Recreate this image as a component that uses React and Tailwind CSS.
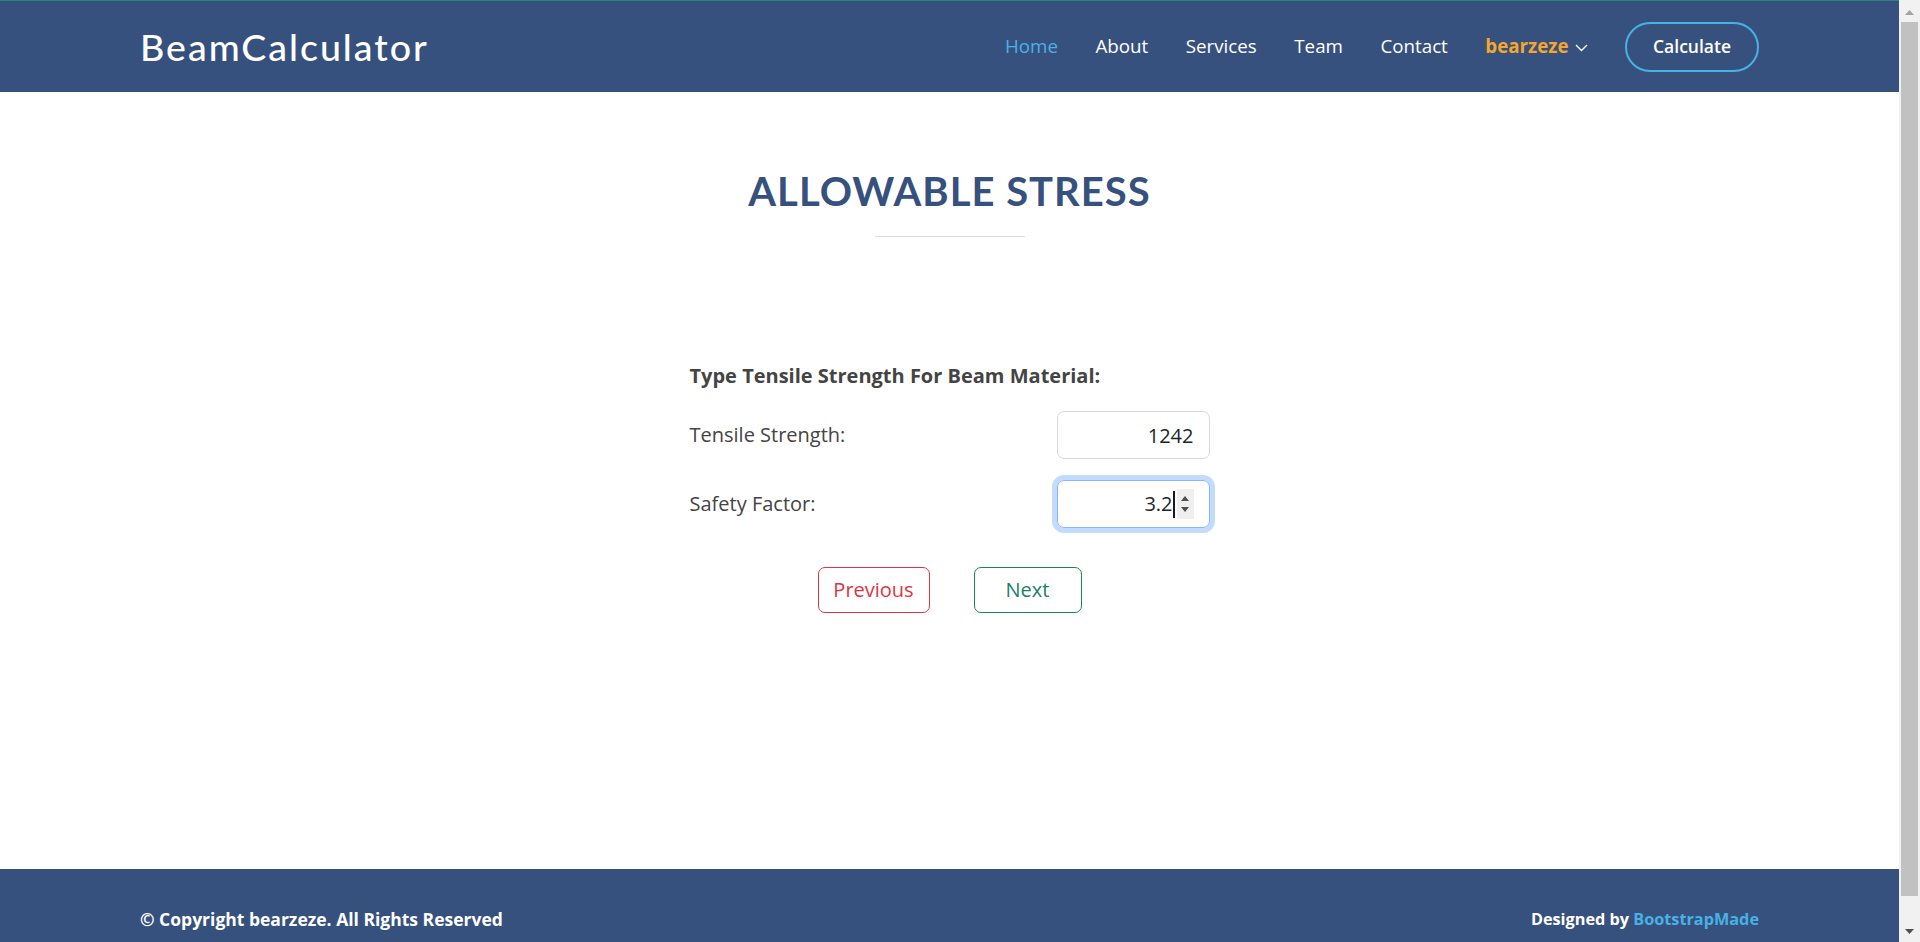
import React from "react";

const jost = { fontFamily: "Lato, 'Noto Sans', sans-serif" };

function Chevron() {
  return (
    <svg width="13" height="8" viewBox="0 0 13 8" className="ml-[6px] mt-[2px]">
      <polyline points="1,1 6.5,6.5 12,1" fill="none" stroke="#ffffff" strokeWidth="1.4" />
    </svg>
  );
}

function Header() {
  return (
    <header className="h-[92px] shrink-0 bg-[#37517e] border-t border-[#2f8080]">
      <div className="w-[1619px] mx-auto h-full flex items-center justify-between">
        <div className="text-[37.5px] font-medium tracking-[2px] text-white leading-none" style={jost}>
          BeamCalculator
        </div>
        <nav className="flex items-center font-['Open_Sans',sans-serif] text-[18.75px] font-medium">
          <a className="pl-[37.5px] text-[#47b2e4]">Home</a>
          <a className="pl-[37.5px] text-white">About</a>
          <a className="pl-[37.5px] text-white">Services</a>
          <a className="pl-[37.5px] text-white">Team</a>
          <a className="pl-[37.5px] text-white">Contact</a>
          <a className="pl-[37.5px] text-[#f5a62c] font-bold flex items-center">
            bearzeze
            <Chevron />
          </a>
          <a className="ml-[37.5px] px-[26px] h-[50px] flex items-center rounded-full border-[2.5px] border-[#47b2e4] text-white text-[17.5px] font-semibold">
            Calculate
          </a>
        </nav>
      </div>
    </header>
  );
}

function Field({ label, children }) {
  return (
    <div className="flex items-center justify-between h-[48px]">
      <span className="text-[20px] text-[#444444]">{label}</span>
      {children}
    </div>
  );
}

function Tri({ up, color, w = 9, h = 5 }) {
  return (
    <svg width={w} height={h} viewBox={`0 0 ${w} ${h}`}>
      {up ? (
        <polygon points={`0,${h} ${w / 2},0 ${w},${h}`} fill={color} />
      ) : (
        <polygon points={`0,0 ${w / 2},${h} ${w},0`} fill={color} />
      )}
    </svg>
  );
}

function Main() {
  return (
    <section className="h-[777px] shrink-0 pt-[75px] bg-white">
      <h2
        className="text-center text-[40px] leading-[48px] font-bold uppercase tracking-[1px] text-[#37517e]"
        style={jost}
      >
        Allowable Stress
      </h2>
      <div className="mt-[21px] mx-auto w-[150px] h-px bg-[#dddddd]" />

      <div className="w-[520px] mx-auto mt-[124px] font-['Open_Sans',sans-serif]">
        <div className="text-[20px] leading-[30px] font-bold text-[#444444]">
          Type Tensile Strength For Beam Material:
        </div>
        <div className="mt-[20px] flex flex-col gap-[21px]">
          <Field label="Tensile Strength:">
            <input
              readOnly
              value="1242"
              className="w-[153px] h-[48px] rounded-[7px] border border-[#d6d9dc] text-right pr-[15px] text-[20px] text-[#212529] outline-none font-['Open_Sans',sans-serif]"
            />
          </Field>
          <Field label="Safety Factor:">
            <div className="w-[153px] h-[48px] rounded-[7px] border border-[#86b7fe] shadow-[0_0_0_5px_#c2dbfe] flex items-center justify-end pr-[15px] text-[20px] text-[#212529]">
              <span>3.2</span>
              <span className="w-[2px] h-[27px] bg-[#1a1a1a]" />
              <span className="ml-[2px] w-[17px] h-[30px] bg-[#efefef] flex flex-col items-center justify-center gap-[6px]">
                <Tri up color="#505050" w={8} h={5} />
                <Tri color="#505050" w={8} h={5} />
              </span>
            </div>
          </Field>
        </div>
        <div className="mt-[39px] flex justify-center gap-[44px]">
          <button className="w-[112px] h-[46px] rounded-[7px] border border-[#dc3545] text-[#dc3545] text-[20px]">
            Previous
          </button>
          <button className="w-[108px] h-[46px] rounded-[7px] border border-[#198754] text-[#1b7f6a] text-[20px]">
            Next
          </button>
        </div>
      </div>
    </section>
  );
}

function Footer() {
  return (
    <footer className="bg-[#37517e] py-[37px] shrink-0">
      <div className="w-[1619px] mx-auto flex justify-between items-center font-['Open_Sans',sans-serif] font-bold text-white leading-[26px]">
        <div className="text-[17.5px]">© Copyright bearzeze. All Rights Reserved</div>
        <div className="text-[16.25px]">
          Designed by <span className="text-[#47b2e4]">BootstrapMade</span>
        </div>
      </div>
    </footer>
  );
}

function Scrollbar() {
  return (
    <div className="w-[21px] h-[942px] shrink-0 bg-[#f1f1f1] flex flex-col">
      <div className="h-[21px] flex justify-center pt-[10px]">
        <Tri up color="#a3a3a3" />
      </div>
      <div className="mt-px mx-[2px] h-[874px] bg-[#c1c1c1]" />
      <div className="flex-1" />
      <div className="h-[21px] flex justify-center pt-[8px]">
        <Tri color="#505050" />
      </div>
    </div>
  );
}

export default function App() {
  return (
    <div className="w-full h-[942px] flex overflow-hidden font-['Open_Sans',sans-serif]">
      <div className="flex-1 h-[942px] flex flex-col overflow-hidden">
        <Header />
        <Main />
        <Footer />
      </div>
      <Scrollbar />
    </div>
  );
}
